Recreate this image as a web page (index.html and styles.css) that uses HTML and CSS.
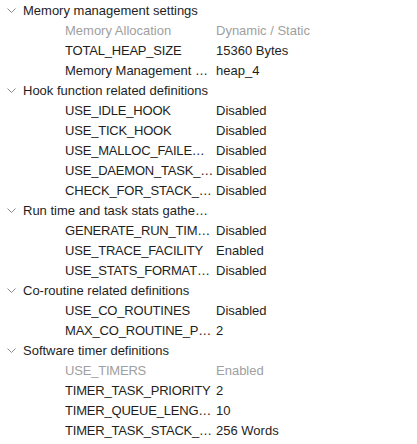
FILE: index.html
```html
<!DOCTYPE html>
<html>
<head>
<meta charset="utf-8">
<link rel="stylesheet" href="styles.css">
</head>
<body>
<div class="tree">
  <div class="group"><svg class="chev" width="9" height="6" viewBox="0 0 9 6"><path d="M0.5 0.5 L4.5 4.5 L8.5 0.5" fill="none" stroke="#8a8a8a" stroke-width="1"/></svg><span class="gtitle">Memory management settings</span></div>
  <div class="row dim"><span class="name">Memory Allocation</span><span class="val">Dynamic / Static</span></div>
  <div class="row"><span class="name const">TOTAL_HEAP_SIZE</span><span class="val">15360 Bytes</span></div>
  <div class="row"><span class="name">Memory Management scheme</span><span class="val">heap_4</span></div>

  <div class="group"><svg class="chev" width="9" height="6" viewBox="0 0 9 6"><path d="M0.5 0.5 L4.5 4.5 L8.5 0.5" fill="none" stroke="#8a8a8a" stroke-width="1"/></svg><span class="gtitle">Hook function related definitions</span></div>
  <div class="row"><span class="name const">USE_IDLE_HOOK</span><span class="val">Disabled</span></div>
  <div class="row"><span class="name const">USE_TICK_HOOK</span><span class="val">Disabled</span></div>
  <div class="row"><span class="name const">USE_MALLOC_FAILED_HOOK</span><span class="val">Disabled</span></div>
  <div class="row"><span class="name const">USE_DAEMON_TASK_STARTUP_HOOK</span><span class="val">Disabled</span></div>
  <div class="row"><span class="name const">CHECK_FOR_STACK_OVERFLOW</span><span class="val">Disabled</span></div>

  <div class="group"><svg class="chev" width="9" height="6" viewBox="0 0 9 6"><path d="M0.5 0.5 L4.5 4.5 L8.5 0.5" fill="none" stroke="#8a8a8a" stroke-width="1"/></svg><span class="gtitle">Run time and task stats gathering related definitions</span></div>
  <div class="row"><span class="name const">GENERATE_RUN_TIME_STATS</span><span class="val">Disabled</span></div>
  <div class="row"><span class="name const">USE_TRACE_FACILITY</span><span class="val">Enabled</span></div>
  <div class="row"><span class="name const">USE_STATS_FORMATTING_FUNCTIONS</span><span class="val">Disabled</span></div>

  <div class="group"><svg class="chev" width="9" height="6" viewBox="0 0 9 6"><path d="M0.5 0.5 L4.5 4.5 L8.5 0.5" fill="none" stroke="#8a8a8a" stroke-width="1"/></svg><span class="gtitle">Co-routine related definitions</span></div>
  <div class="row"><span class="name const">USE_CO_ROUTINES</span><span class="val">Disabled</span></div>
  <div class="row"><span class="name const">MAX_CO_ROUTINE_PRIORITIES</span><span class="val">2</span></div>

  <div class="group"><svg class="chev" width="9" height="6" viewBox="0 0 9 6"><path d="M0.5 0.5 L4.5 4.5 L8.5 0.5" fill="none" stroke="#8a8a8a" stroke-width="1"/></svg><span class="gtitle">Software timer definitions</span></div>
  <div class="row dim"><span class="name const">USE_TIMERS</span><span class="val">Enabled</span></div>
  <div class="row"><span class="name const">TIMER_TASK_PRIORITY</span><span class="val">2</span></div>
  <div class="row"><span class="name const">TIMER_QUEUE_LENGTH</span><span class="val">10</span></div>
  <div class="row"><span class="name const">TIMER_TASK_STACK_DEPTH</span><span class="val">256 Words</span></div>
</div>
</body>
</html>
```
FILE: styles.css
```css
html, body {
  margin: 0;
  padding: 0;
  background: #ffffff;
}
.tree {
  font-family: "Liberation Sans", Arial, sans-serif;
  font-size: 13px;
  color: #1e1e1e;
}
.group {
  height: 20px;
  display: flex;
  align-items: center;
  padding-left: 7px;
}
.chev {
  display: block;
  flex: none;
  margin-right: 7px;
  margin-top: 1px;
}
.gtitle {
  width: 189px;
  white-space: nowrap;
  overflow: hidden;
  text-overflow: ellipsis;
}
.row {
  height: 20px;
  display: flex;
  align-items: center;
  padding-left: 65px;
}
.name {
  width: 149px;
  margin-right: 2px;
  flex: none;
  white-space: nowrap;
  overflow: hidden;
  text-overflow: ellipsis;
}
.const {
  letter-spacing: -0.2px;
}
.val {
  white-space: nowrap;
}
.dim {
  color: #a0a0a0;
}
```
